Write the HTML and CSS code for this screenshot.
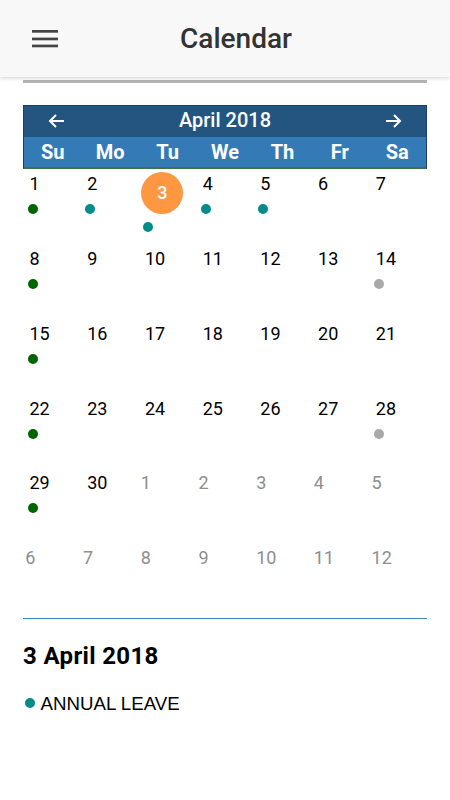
FILE: index.html
```html
<!DOCTYPE html>
<html lang="en">
<head>
<meta charset="utf-8">
<title>Calendar</title>
<link rel="stylesheet" href="styles.css">
</head>
<body>
<header class="appbar">
  <button class="menu" aria-label="Menu">
    <svg width="26" height="18" viewBox="0 0 26 18"><rect x="0" y="0" width="26" height="2.7" fill="#444"/><rect x="0" y="7.6" width="26" height="2.7" fill="#444"/><rect x="0" y="14.6" width="26" height="2.7" fill="#444"/></svg>
  </button>
  <h1 class="title">Calendar</h1>
</header>
<main class="content">
  <div class="rule"></div>
  <section class="calendar">
    <div class="cal-head">
      <div class="month-bar">
        <svg class="arrow" width="17" height="14" viewBox="0 0 17 14"><path d="M16 7H2M8 1L2 7l6 6" fill="none" stroke="#fff" stroke-width="2"/></svg>
        <span class="month">April 2018</span>
        <svg class="arrow" width="17" height="14" viewBox="0 0 17 14"><path d="M1 7h14M9 1l6 6-6 6" fill="none" stroke="#fff" stroke-width="2"/></svg>
      </div>
      <div class="weekdays">
        <span>Su</span><span>Mo</span><span>Tu</span><span>We</span><span>Th</span><span>Fr</span><span>Sa</span>
      </div>
    </div>
    <div class="grid">
      <div class="cell"><span class="num">1</span><i class="dot green"></i></div>
      <div class="cell"><span class="num">2</span><i class="dot teal"></i></div>
      <div class="cell today"><span class="num">3</span><i class="dot teal"></i></div>
      <div class="cell"><span class="num">4</span><i class="dot teal"></i></div>
      <div class="cell"><span class="num">5</span><i class="dot teal"></i></div>
      <div class="cell"><span class="num">6</span></div>
      <div class="cell"><span class="num">7</span></div>

      <div class="cell"><span class="num">8</span><i class="dot green"></i></div>
      <div class="cell"><span class="num">9</span></div>
      <div class="cell"><span class="num">10</span></div>
      <div class="cell"><span class="num">11</span></div>
      <div class="cell"><span class="num">12</span></div>
      <div class="cell"><span class="num">13</span></div>
      <div class="cell"><span class="num">14</span><i class="dot grey"></i></div>

      <div class="cell"><span class="num">15</span><i class="dot green"></i></div>
      <div class="cell"><span class="num">16</span></div>
      <div class="cell"><span class="num">17</span></div>
      <div class="cell"><span class="num">18</span></div>
      <div class="cell"><span class="num">19</span></div>
      <div class="cell"><span class="num">20</span></div>
      <div class="cell"><span class="num">21</span></div>

      <div class="cell"><span class="num">22</span><i class="dot green"></i></div>
      <div class="cell"><span class="num">23</span></div>
      <div class="cell"><span class="num">24</span></div>
      <div class="cell"><span class="num">25</span></div>
      <div class="cell"><span class="num">26</span></div>
      <div class="cell"><span class="num">27</span></div>
      <div class="cell"><span class="num">28</span><i class="dot grey"></i></div>

      <div class="cell"><span class="num">29</span><i class="dot green"></i></div>
      <div class="cell"><span class="num">30</span></div>
      <div class="cell other"><span class="num">1</span></div>
      <div class="cell other"><span class="num">2</span></div>
      <div class="cell other"><span class="num">3</span></div>
      <div class="cell other"><span class="num">4</span></div>
      <div class="cell other"><span class="num">5</span></div>

      <div class="cell other"><span class="num">6</span></div>
      <div class="cell other"><span class="num">7</span></div>
      <div class="cell other"><span class="num">8</span></div>
      <div class="cell other"><span class="num">9</span></div>
      <div class="cell other"><span class="num">10</span></div>
      <div class="cell other"><span class="num">11</span></div>
      <div class="cell other"><span class="num">12</span></div>
    </div>
  </section>
  <section class="details">
    <h2 class="date">3 April 2018</h2>
    <div class="event"><i class="dot teal"></i><span>ANNUAL LEAVE</span></div>
  </section>
</main>
</body>
</html>
```
FILE: styles.css
```css
* { box-sizing: border-box; }
html, body { margin: 0; padding: 0; background: #fff; }
body { font-family: Roboto, "Liberation Sans", Arial, sans-serif; color: #000; }

.appbar {
  height: 77px;
  background: #f8f8f8;
  box-shadow: 0 1px 4px rgba(0,0,0,0.18);
  display: flex;
  align-items: center;
  position: relative;
  z-index: 1;
}
.menu {
  margin: 1px 0 0 32px;
  padding: 0;
  border: 0;
  background: none;
  width: 26px;
  height: 18px;
  display: block;
}
.menu svg { display: block; }
.title {
  flex: 1;
  margin: 0 36px 0 0;
  text-align: center;
  font-size: 28px;
  font-weight: 500;
  color: #333;
  line-height: 32px;
}

.content { padding: 0 23px; }
.rule {
  margin-top: 3px;
  height: 3px;
  background: #b4b4b4;
}

.calendar { margin-top: 22px; }
.cal-head {
  border: 1px solid #1c3b6e;
  border-bottom: 2px solid #3c763d;
}
.month-bar {
  height: 31px;
  background: #245580;
  display: flex;
  align-items: center;
  justify-content: space-between;
  padding: 0 24px 1px;
  color: #fff;
}
.arrow { display: block; }
.month { font-size: 20px; font-weight: 500; line-height: 24px; margin-bottom: 2px; }
.weekdays {
  height: 30px;
  background: #337ab7;
  display: grid;
  grid-template-columns: repeat(7, 1fr);
  align-items: center;
  color: #fff;
  font-size: 20px;
  font-weight: 700;
  text-align: center;
}

.grid {
  display: grid;
  grid-template-columns: repeat(7, 1fr);
  grid-template-rows: 75px 75px 75px 74px 75px 75px;
  border-bottom: 1px solid #3a85c6;
}
.cell { padding-top: 3px; }
.num {
  display: block;
  font-size: 18px;
  line-height: 24px;
  height: 24px;
  padding-left: 6.5px;
  color: #000;
}
.other .num { color: #8e8e8e; padding-left: 2.3px; }
.today .num {
  width: 42px;
  height: 42px;
  margin-left: 3px;
  padding: 0;
  border-radius: 50%;
  background: #fd9742;
  color: #fff;
  font-weight: 500;
  display: flex;
  align-items: center;
  justify-content: center;
}
.dot {
  display: block;
  width: 10px;
  height: 10px;
  border-radius: 50%;
  margin: 8px 0 0 4.5px;
}
.green { background: #006400; }
.teal { background: #008b8b; }
.grey { background: #a9a9a9; }

.details { padding-top: 23px; }
.date {
  margin: 0;
  font-size: 24px;
  font-weight: 700;
  line-height: 28px;
  letter-spacing: 0.35px;
}
.event {
  margin-top: 22.5px;
  display: flex;
  align-items: center;
  font-family: "Liberation Sans", Arial, sans-serif;
  font-size: 18.7px;
  line-height: 21px;
}
.event .dot { margin: 0 6px 0 1.5px; }
```
